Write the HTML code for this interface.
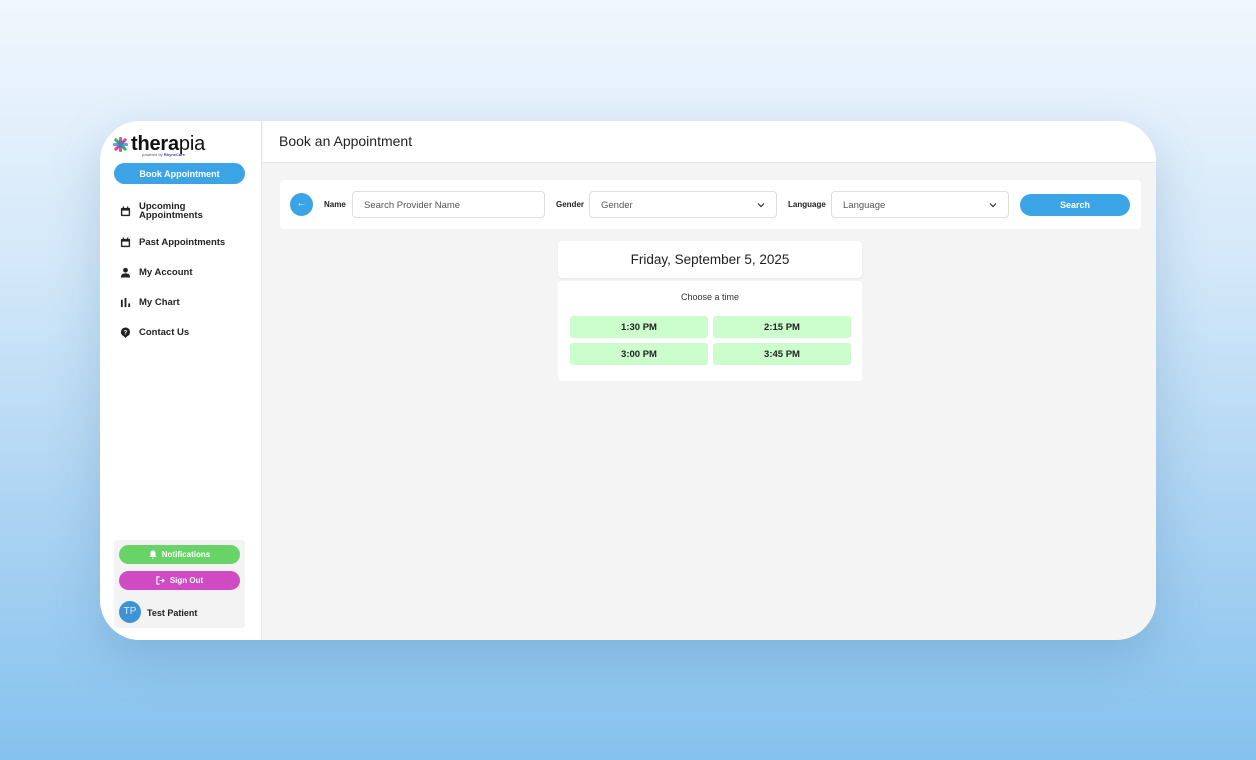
<!DOCTYPE html>
<html><head><style>
*{box-sizing:border-box;margin:0;padding:0}
body{width:1256px;height:760px;overflow:hidden;font-family:"Liberation Sans",sans-serif;background:linear-gradient(180deg,#f0f6fd 0%,#d3e8f9 35%,#a9d2f2 70%,#85c2ee 100%);position:relative}
.frame{position:absolute;left:100px;top:121px;width:1056px;height:519px;border-radius:40px;background:#f4f4f4;overflow:hidden;box-shadow:0 20px 50px rgba(60,110,160,.25)}
.side{position:absolute;left:0;top:0;width:162px;height:519px;background:#fff;border-right:1px solid #e4e4e4}
.head{position:absolute;left:163px;top:0;right:0;height:42px;background:#fff;border-bottom:1px solid #e6e6e6;font-size:14px;color:#222;padding:12px 0 0 16px}
.abs{position:absolute}
.nav{position:absolute;left:20px;font-size:9.5px;font-weight:bold;color:#222;display:flex;align-items:center;gap:8px;line-height:9px}
.nav svg{width:11px;height:11px}
.btn{position:absolute;border-radius:12px;color:#fff;font-weight:bold;font-size:9px;display:flex;align-items:center;justify-content:center;gap:5px}
.lbl{position:absolute;font-size:8px;font-weight:bold;color:#222}
.inp{position:absolute;height:27px;border:1px solid #dedede;border-radius:4px;background:#fff;font-size:9.5px;color:#555;padding:8px 0 0 11px}
.ts{position:absolute;width:138px;height:22px;background:#ccfdcc;border-radius:3px;font-size:9.5px;font-weight:bold;color:#222;text-align:center;line-height:23px}
</style></head><body>
<div class="frame">
<div class="side">
 <div class="abs" style="left:13px;top:13px;display:flex;align-items:center">
  <svg width="15" height="15" viewBox="0 0 16 16"><g stroke-width="3.2" stroke-linecap="round"><line x1="3" y1="3" x2="13" y2="13" stroke="#35b34a"/><line x1="13" y1="3" x2="3" y2="13" stroke="#e0409c"/><line x1="8" y1="1.5" x2="8" y2="14.5" stroke="#8e44ad" opacity=".8"/><line x1="1.5" y1="8" x2="14.5" y2="8" stroke="#2b8de0" opacity=".8"/></g></svg>
  <span style="font-size:20px;color:#111;margin-left:3px;letter-spacing:-.2px;line-height:20px"><b>thera</b>pia</span>
 </div>
 <div class="abs" style="left:42px;top:31px;font-size:4px;color:#555">powered by <b style="color:#3a3aa0">RhyneCare</b></div>
 <div class="btn" style="left:14px;top:42px;width:131px;height:21px;background:#3ba4e6;font-size:9px">Book Appointment</div>
 <div class="nav" style="top:81px"><svg viewBox="0 0 12 12"><rect x="1" y="2" width="10" height="9" rx="1" fill="#222"/><rect x="2.5" y="5" width="7" height="4.5" fill="#fff"/><rect x="3" y="0.5" width="1.3" height="3" fill="#222"/><rect x="7.7" y="0.5" width="1.3" height="3" fill="#222"/></svg><span>Upcoming<br>Appointments</span></div>
 <div class="nav" style="top:116px"><svg viewBox="0 0 12 12"><rect x="1" y="2" width="10" height="9" rx="1" fill="#222"/><rect x="2.5" y="5" width="7" height="4.5" fill="#fff"/><rect x="3" y="0.5" width="1.3" height="3" fill="#222"/><rect x="7.7" y="0.5" width="1.3" height="3" fill="#222"/></svg><span>Past Appointments</span></div>
 <div class="nav" style="top:146px"><svg viewBox="0 0 12 12"><circle cx="6" cy="3.5" r="2.6" fill="#222"/><path d="M1 11.5C1 8 3 7 6 7s5 1 5 4.5z" fill="#222"/></svg><span>My Account</span></div>
 <div class="nav" style="top:176px"><svg viewBox="0 0 12 12"><rect x="1" y="3" width="2" height="8" fill="#222"/><rect x="5" y="1" width="2" height="10" fill="#222"/><rect x="9" y="7" width="2" height="4" fill="#222"/></svg><span>My Chart</span></div>
 <div class="nav" style="top:206px"><svg viewBox="0 0 12 12"><circle cx="6" cy="5.5" r="5" fill="#222"/><path d="M4 10l2 2 2-2z" fill="#222"/><text x="6" y="8" font-size="7" fill="#fff" text-anchor="middle" font-weight="bold" font-family="Liberation Sans">?</text></svg><span>Contact Us</span></div>
 <div class="abs" style="left:14px;top:419px;width:131px;height:88px;background:#f3f3f3;border-radius:3px"></div>
 <div class="btn" style="left:19px;top:424px;width:121px;height:19px;background:#68d467;font-size:8px"><svg width="8" height="9" viewBox="0 0 8 9"><path d="M4 .5C2 .5 1.5 2 1.5 3.5V6L.5 7h7l-1-1V3.5C6.5 2 6 .5 4 .5zM3 7.8h2a1 1 0 0 1-2 0z" fill="#fff"/></svg>Notifications</div>
 <div class="btn" style="left:19px;top:450px;width:121px;height:19px;background:#d04ac4;font-size:8px"><svg width="9" height="9" viewBox="0 0 10 10" fill="none" stroke="#fff" stroke-width="1.2"><path d="M4 1H1v8h3M4 5h5M7 3l2 2-2 2"/></svg>Sign Out</div>
 <div class="abs" style="left:19px;top:480px;width:22px;height:22px;border-radius:50%;background:#3d93d6;color:#dbeefd;font-size:10px;text-align:center;line-height:22px">TP</div>
 <div class="abs" style="left:47px;top:487px;font-size:9px;font-weight:bold;color:#222">Test Patient</div>
</div>
<div class="head">Book an Appointment</div>
<div class="abs" style="left:180px;top:59px;width:861px;height:49px;background:#fff;border-radius:4px"></div>
<div class="abs" style="left:190px;top:72px;width:23px;height:23px;border-radius:50%;background:#3ba4e6;color:#fff;font-size:10px;text-align:center;line-height:22px">←</div>
<div class="lbl" style="left:224px;top:79px">Name</div>
<div class="inp" style="left:252px;top:70px;width:193px">Search Provider Name</div>
<div class="lbl" style="left:456px;top:79px">Gender</div>
<div class="inp" style="left:489px;top:70px;width:188px">Gender<svg class="abs" style="right:11px;top:10px" width="8" height="6" viewBox="0 0 8 6"><path d="M1 1.5l3 3 3-3" stroke="#333" stroke-width="1.2" fill="none"/></svg></div>
<div class="lbl" style="left:688px;top:79px">Language</div>
<div class="inp" style="left:731px;top:70px;width:178px">Language<svg class="abs" style="right:11px;top:10px" width="8" height="6" viewBox="0 0 8 6"><path d="M1 1.5l3 3 3-3" stroke="#333" stroke-width="1.2" fill="none"/></svg></div>
<div class="btn" style="left:920px;top:73px;width:110px;height:22px;background:#3ba4e6;font-size:9px">Search</div>
<div class="abs" style="left:458px;top:120px;width:304px;height:37px;background:#fff;border-radius:4px;font-size:13.5px;color:#222;text-align:center;line-height:37px;box-shadow:0 1px 2px rgba(0,0,0,.06)">Friday, September 5, 2025</div>
<div class="abs" style="left:458px;top:160px;width:304px;height:100px;background:#fff;border-radius:4px"></div>
<div class="abs" style="left:458px;top:171px;width:304px;text-align:center;font-size:9px;color:#333">Choose a time</div>
<div class="ts" style="left:470px;top:195px">1:30 PM</div>
<div class="ts" style="left:613px;top:195px">2:15 PM</div>
<div class="ts" style="left:470px;top:222px">3:00 PM</div>
<div class="ts" style="left:613px;top:222px">3:45 PM</div>
</div>
</body></html>
